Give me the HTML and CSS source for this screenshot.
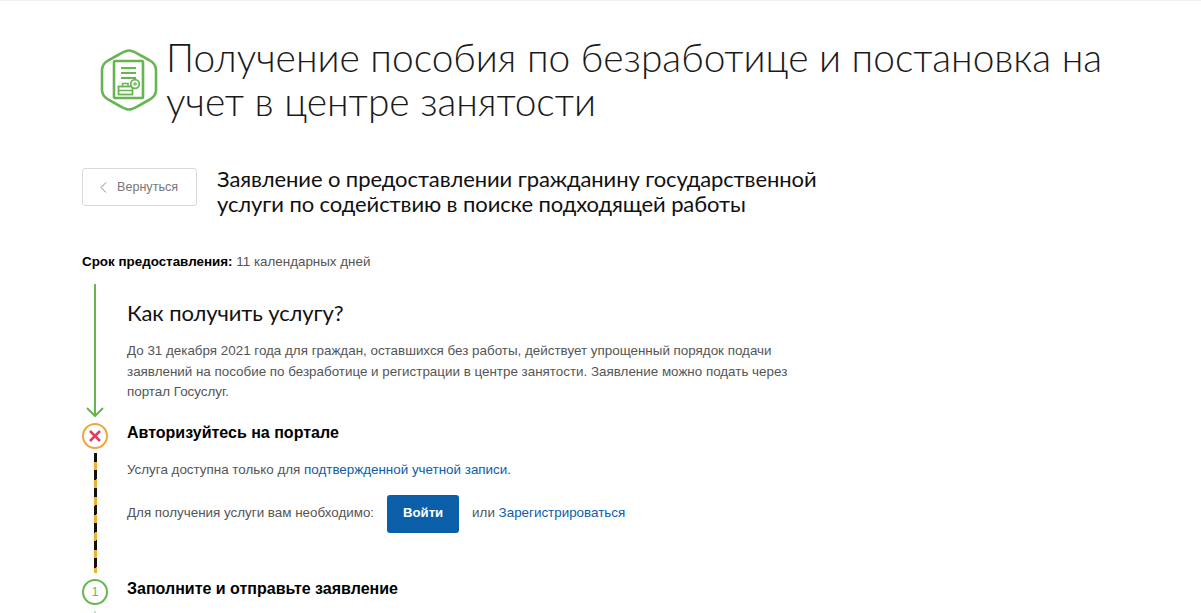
FILE: index.html
```html
<!DOCTYPE html>
<html lang="ru">
<head>
  <meta charset="UTF-8" />
  <title>Получение пособия по безработице</title>
  <link rel="stylesheet" href="styles.css">
</head>
<body>
  <div class="top-line"></div>
  <div class="page">
    <header class="page-head">
      <svg class="service-icon" width="58" height="64" viewBox="0 0 58 64" fill="none" stroke="#66b552">
        <path d="M29 2.500 C33 2.500 36 5 40 7 L50 12.500 C54 15 56 17.500 56 22 L56 42 C56 46.500 54 49 50 51.500 L40 57 C36 59 33 61.500 29 61.500 C25 61.500 22 59 18 57 L8 51.500 C4 49 2 46.500 2 42 L2 22 C2 17.500 4 15 8 12.500 L18 7 C22 5 25 2.500 29 2.500 Z" stroke-width="2.600"/>
        <rect x="14" y="13" width="29" height="37" rx="1" stroke-width="2.600"/>
        <path d="M21 20 H36 M21 25 H36 M21 30 H36" stroke-width="2"/>
        <rect x="18.500" y="38.500" width="14" height="8" stroke-width="1.800"/>
        <path d="M22.500 38.500 V35.500 H28 V38.500 M18.500 42.500 H32.500" stroke-width="1.500"/>
        <circle cx="35" cy="36" r="4.300" stroke-width="1.800" fill="#fff"/>
        <circle cx="35" cy="36" r="1.200" stroke-width="1.200"/>
      </svg>
      <h1>Получение пособия по безработице и постановка на учет в центре занятости</h1>
    </header>

    <div class="doc-head">
      <a class="btn-back" href="#">
        <svg width="7" height="11" viewBox="0 0 7 11" fill="none" stroke="#8a8a8a" stroke-width="1"><path d="M6 .5 1 5.500l5 5"/></svg>
        Вернуться
      </a>
      <h2>Заявление о предоставлении гражданину государственной услуги по содействию в поиске подходящей работы</h2>
    </div>

    <p class="term"><strong>Срок предоставления:</strong> 11 календарных дней</p>

    <div class="steps">
      <div class="rail rail-intro">
        <div class="line-green"></div>
        <svg class="arrow" width="18" height="10" viewBox="0 0 18 10" fill="none" stroke="#66b552" stroke-width="2"><path d="M1 1l8 8 8-8"/></svg>
      </div>
      <div class="intro">
        <h3>Как получить услугу?</h3>
        <p>До 31 декабря 2021 года для граждан, оставшихся без работы, действует упрощенный порядок подачи заявлений на пособие по безработице и регистрации в центре занятости. Заявление можно подать через портал Госуслуг.</p>
      </div>

      <div class="rail">
        <div class="circle circle-error">
          <svg width="14" height="14" viewBox="0 0 14 14" fill="none" stroke="#d9415f" stroke-width="2.600"><path d="M2 2l10 10M12 2 2 12"/></svg>
        </div>
        <div class="line-hazard"></div>
      </div>
      <div class="step step-auth">
        <h4>Авторизуйтесь на портале</h4>
        <p>Услуга доступна только для <a href="#">подтвержденной учетной записи</a>.</p>
        <div class="login-row">
          <span>Для получения услуги вам необходимо:</span>
          <a class="btn-login" href="#">Войти</a>
          <span>или <a href="#">Зарегистрироваться</a></span>
        </div>
      </div>

      <div class="rail">
        <div class="circle circle-num">1</div>
        <div class="line-next"></div>
      </div>
      <div class="step">
        <h4>Заполните и отправьте заявление</h4>
      </div>
    </div>
  </div>
</body>
</html>
```
FILE: styles.css
```css
* {
  margin: 0;
  padding: 0;
  box-sizing: border-box;
}

html, body {
  height: 613px;
  overflow: hidden;
}

body {
  background: #fff;
  color: #000;
  font-family: 'Liberation Sans', Arial, sans-serif;
  font-size: 13.4px;
}

a {
  color: #0b5ea8;
  text-decoration: none;
}

.top-line {
  height: 1px;
  background: #f0f0f0;
}

.page {
  padding-left: 82px;
  width: 1120px;
}

/* Шапка */
.page-head {
  display: flex;
  align-items: center;
  gap: 8px;
  padding: 34px 0 0 18px;
}

.service-icon {
  flex: none;
  margin-top: 2px;
}

h1 {
  font-family: 'Lato', 'Open Sans', sans-serif;
  font-size: 38.900px;
  font-weight: 300;
  line-height: 44px;
  color: #1a1a1a;
}

.doc-head {
  display: flex;
  align-items: flex-start;
  gap: 20px;
  margin-top: 45px;
}

.btn-back {
  flex: none;
  display: flex;
  align-items: center;
  gap: 10px;
  width: 115px;
  height: 38px;
  padding-left: 17px;
  border: 1px solid #d9d9d9;
  border-radius: 3px;
  color: #777;
  font-size: 12.600px;
}

h2 {
  width: 620px;
  margin-top: -2px;
  font-family: 'Lato', 'Open Sans', sans-serif;
  font-size: 22px;
  font-weight: 400;
  letter-spacing: -.1px;
  line-height: 25px;
  color: #111;
}

.term {
  margin-top: 38px;
  line-height: 16px;
  color: #555;
}

.term strong {
  color: #000;
}

/* Шаги */
.steps {
  display: grid;
  grid-template-columns: 26px 680px;
  column-gap: 19px;
  margin-top: 14px;
}

.rail {
  display: flex;
  flex-direction: column;
  align-items: center;
}

.rail-intro {
  height: 139px;
  padding-bottom: 6px;
}

.line-green {
  flex: 1;
  width: 2px;
  background: #66b552;
  margin-bottom: -9px;
}

.arrow {
  flex: none;
}

.circle {
  flex: none;
  display: flex;
  align-items: center;
  justify-content: center;
  width: 26px;
  height: 26px;
  border-radius: 50%;
  background: #fff;
}

.circle-error {
  border: 2px solid #f0a63c;
}

.circle-num {
  border: 2px solid #66b552;
  color: #66b552;
  font-size: 12px;
}

.line-hazard {
  width: 3px;
  height: 120px;
  margin: 4px 0 6px;
  background: repeating-linear-gradient(165deg, #111 0, #111 9px, #efb03a 9px, #efb03a 17px);
}

.line-next {
  width: 2px;
  height: 6px;
  margin-top: 6px;
  background: #66b552;
  opacity: .4;
}

.intro {
  padding-top: 15px;
}

h3 {
  font-family: 'Lato', 'Open Sans', sans-serif;
  font-size: 22px;
  font-weight: 400;
  letter-spacing: -.1px;
  line-height: 28px;
  color: #111;
}

.intro p {
  margin-top: 14px;
  line-height: 20.500px;
  color: #555;
}

.step h4 {
  font-size: 16px;
  font-weight: 700;
  line-height: 20px;
}

.step-auth p {
  margin-top: 17px;
  line-height: 20px;
  color: #555;
}

.login-row {
  display: flex;
  align-items: center;
  gap: 13px;
  margin-top: 15px;
  color: #555;
}

.login-row span {
  margin-bottom: 3px;
}

.btn-login {
  display: flex;
  align-items: center;
  justify-content: center;
  width: 72px;
  height: 38px;
  padding-bottom: 3px;
  border-radius: 3px;
  background: #0b5ea8;
  color: #fff;
  font-size: 13.200px;
  font-weight: 700;
}
```
